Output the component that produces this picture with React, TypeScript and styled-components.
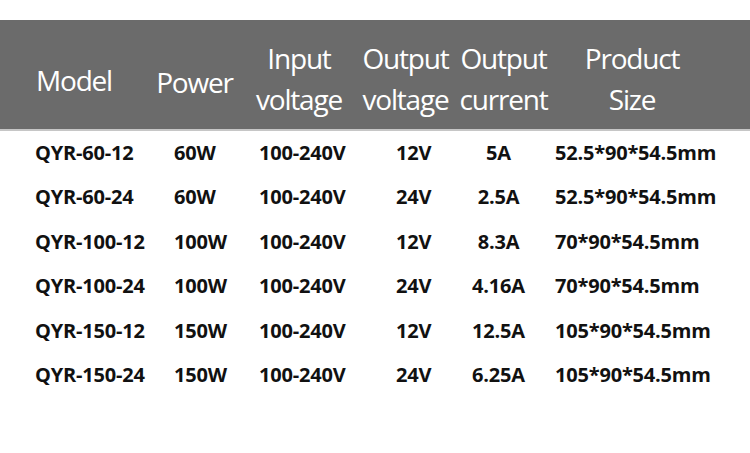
import React from "react";
import styled, { createGlobalStyle } from "styled-components";

const GlobalStyle = createGlobalStyle`
  html, body { margin: 0; padding: 0; background: #ffffff; }
  body { font-family: "Open Sans", "Noto Sans", sans-serif; }
`;

const Page = styled.div`
  width: 750px;
  height: 453px;
  background: #ffffff;
  padding-top: 20px;
  box-sizing: border-box;
  overflow: hidden;
`;

const HeaderBar = styled.div`
  height: 99px;
  padding-top: 10px;
  box-sizing: content-box;
  background: #6b6b6b;
  border-bottom: 2px solid #c6c6c6;
  display: grid;
  grid-template-columns: 148px 93px 116px 97px 99px 158px;
  align-items: center;
`;

const HeadCell = styled.div<{ $pt?: number; $pb?: number }>`
  color: #ffffff;
  font-family: "Open Sans", "Noto Sans", sans-serif;
  font-weight: 400;
  font-size: 28px;
  font-stretch: 98%;
  letter-spacing: -1.2px;
  line-height: 41px;
  text-align: center;
  white-space: nowrap;
  padding-top: ${(p) => p.$pt ?? 0}px;
  padding-bottom: ${(p) => p.$pb ?? 0}px;
`;

const Body = styled.div`
  display: grid;
  grid-template-columns: 139px 85px 137px 46px 113px 1fr;
  grid-auto-rows: 44.45px;
  padding-left: 35px;
`;

const Cell = styled.div<{ $center?: boolean }>`
  color: #111111;
  font-family: "Open Sans", "Noto Sans", sans-serif;
  font-weight: 700;
  font-size: 20px;
  font-stretch: 96%;
  letter-spacing: -0.2px;
  line-height: 44.45px;
  white-space: nowrap;
  text-align: ${(p) => (p.$center ? "center" : "left")};
`;

const rows = [
  ["QYR-60-12", "60W", "100-240V", "12V", "5A", "52.5*90*54.5mm"],
  ["QYR-60-24", "60W", "100-240V", "24V", "2.5A", "52.5*90*54.5mm"],
  ["QYR-100-12", "100W", "100-240V", "12V", "8.3A", "70*90*54.5mm"],
  ["QYR-100-24", "100W", "100-240V", "24V", "4.16A", "70*90*54.5mm"],
  ["QYR-150-12", "150W", "100-240V", "12V", "12.5A", "105*90*54.5mm"],
  ["QYR-150-24", "150W", "100-240V", "24V", "6.25A", "105*90*54.5mm"],
];

export default function App() {
  return (
    <>
      <GlobalStyle />
      <Page>
        <HeaderBar>
          <HeadCell $pt={2}>Model</HeadCell>
          <HeadCell $pt={5}>Power</HeadCell>
          <HeadCell $pb={2}>
            Input
            <br />
            voltage
          </HeadCell>
          <HeadCell $pb={2}>
            Output
            <br />
            voltage
          </HeadCell>
          <HeadCell $pb={2}>
            Output
            <br />
            current
          </HeadCell>
          <HeadCell $pb={2}>
            Product
            <br />
            Size
          </HeadCell>
        </HeaderBar>
        <Body>
          {rows.map((r) =>
            r.map((v, i) => (
              <Cell key={r[0] + i} $center={i === 4}>
                {v}
              </Cell>
            ))
          )}
        </Body>
      </Page>
    </>
  );
}
